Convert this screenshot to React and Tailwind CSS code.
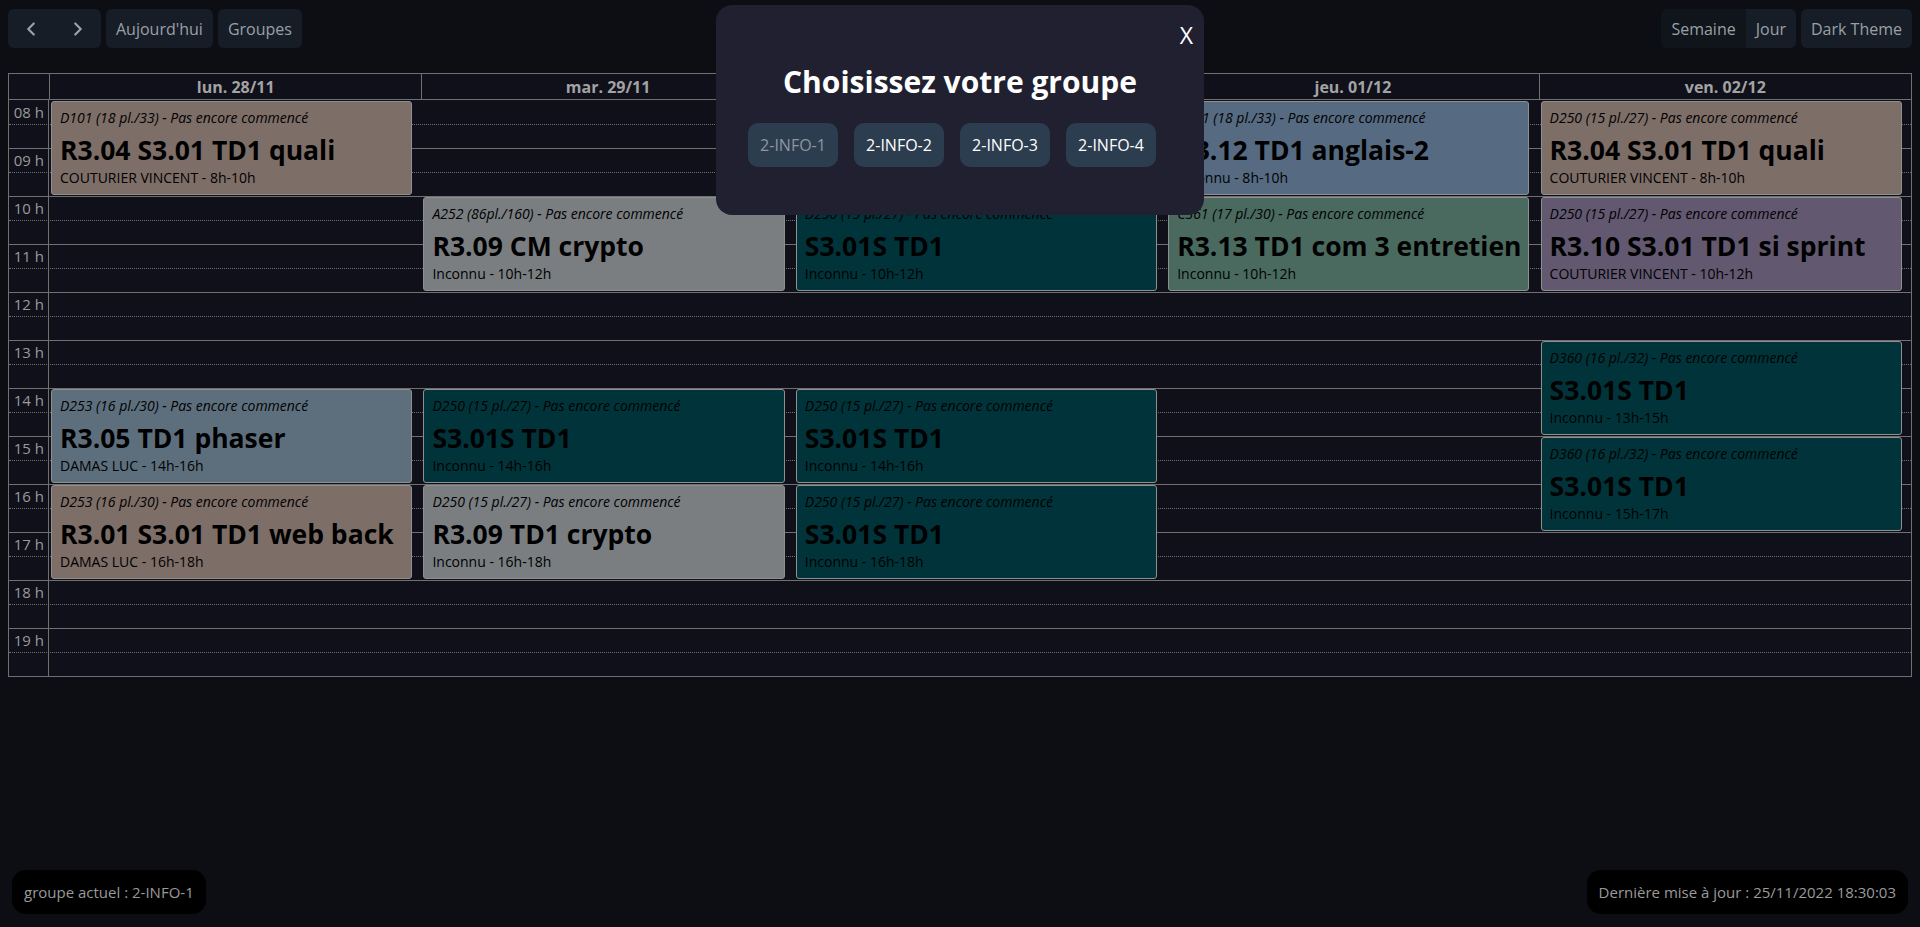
import { ChevronLeft, ChevronRight } from 'lucide-react';

// Week grid starts at 08h, 12 hours, two 24px slots per hour
const START = 8;
const HOURS = 12;

const days = ['lun. 28/11', 'mar. 29/11', 'mer. 30/11', 'jeu. 01/12', 'ven. 02/12'];

const BROWN = '#7d6e68';
const TEAL = '#00343a';
const GREY = '#7a7e80';

const events = [
  { d: 0, s: 8, e: 10, c: BROWN, room: 'D101 (18 pl./33)', title: 'R3.04 S3.01 TD1 quali', who: 'COUTURIER VINCENT' },
  { d: 0, s: 14, e: 16, c: '#5d6f7d', room: 'D253 (16 pl./30)', title: 'R3.05 TD1 phaser', who: 'DAMAS LUC' },
  { d: 0, s: 16, e: 18, c: BROWN, room: 'D253 (16 pl./30)', title: 'R3.01 S3.01 TD1 web back', who: 'DAMAS LUC' },
  { d: 1, s: 10, e: 12, c: GREY, room: 'A252 (86pl./160)', title: 'R3.09 CM crypto', who: 'Inconnu' },
  { d: 1, s: 14, e: 16, c: TEAL, room: 'D250 (15 pl./27)', title: 'S3.01S TD1', who: 'Inconnu' },
  { d: 1, s: 16, e: 18, c: GREY, room: 'D250 (15 pl./27)', title: 'R3.09 TD1 crypto', who: 'Inconnu' },
  { d: 2, s: 10, e: 12, c: TEAL, room: 'D250 (15 pl./27)', title: 'S3.01S TD1', who: 'Inconnu' },
  { d: 2, s: 14, e: 16, c: TEAL, room: 'D250 (15 pl./27)', title: 'S3.01S TD1', who: 'Inconnu' },
  { d: 2, s: 16, e: 18, c: TEAL, room: 'D250 (15 pl./27)', title: 'S3.01S TD1', who: 'Inconnu' },
  { d: 3, s: 8, e: 10, c: '#566b82', room: 'D101 (18 pl./33)', title: 'R3.12 TD1 anglais-2', who: 'Inconnu' },
  { d: 3, s: 10, e: 12, c: '#4a6a60', room: 'C361 (17 pl./30)', title: 'R3.13 TD1 com 3 entretien', who: 'Inconnu' },
  { d: 4, s: 8, e: 10, c: BROWN, room: 'D250 (15 pl./27)', title: 'R3.04 S3.01 TD1 quali', who: 'COUTURIER VINCENT' },
  { d: 4, s: 10, e: 12, c: '#625870', room: 'D250 (15 pl./27)', title: 'R3.10 S3.01 TD1 si sprint', who: 'COUTURIER VINCENT' },
  { d: 4, s: 13, e: 15, c: TEAL, room: 'D360 (16 pl./32)', title: 'S3.01S TD1', who: 'Inconnu' },
  { d: 4, s: 15, e: 17, c: TEAL, room: 'D360 (16 pl./32)', title: 'S3.01S TD1', who: 'Inconnu' },
];

const groups = ['2-INFO-1', '2-INFO-2', '2-INFO-3', '2-INFO-4'];

function Toolbar() {
  return (
    <div className="flex items-start justify-between px-2 pt-[9px]">
      <div className="flex gap-[5px]">
        <div className="flex h-[39px] overflow-hidden rounded-md bg-[#161d27]">
          <button className="flex w-[46px] items-center justify-center text-[#9aa0a6]">
            <ChevronLeft size={22} strokeWidth={2.4} />
          </button>
          <button className="flex w-[47px] items-center justify-center text-[#9aa0a6]">
            <ChevronRight size={22} strokeWidth={2.4} />
          </button>
        </div>
        <button className="h-[39px] rounded-md bg-[#161d27] px-[10px] text-[16px] text-[#9aa0a6]">Aujourd'hui</button>
        <button className="h-[39px] rounded-md bg-[#161d27] px-[10px] text-[16px] text-[#9aa0a6]">Groupes</button>
      </div>
      <div className="flex gap-[5px]">
        <div className="flex h-[39px] overflow-hidden rounded-md">
          <button className="bg-[#0f151a] px-[10px] text-[16px] text-[#9aa0a6]">Semaine</button>
          <button className="bg-[#161d27] px-[10px] text-[16px] text-[#9aa0a6]">Jour</button>
        </div>
        <button className="h-[39px] rounded-md bg-[#161d27] px-[10px] text-[16px] text-[#9aa0a6]">Dark Theme</button>
      </div>
    </div>
  );
}

function Event({ ev }) {
  return (
    <div
      className="z-10 mb-px ml-[2px] mr-[2.5%] mt-px overflow-hidden rounded-[3px] border border-[#8f8f8f] px-[8px] pt-[6px] text-black"
      style={{ gridColumn: ev.d + 2, gridRow: `${(ev.s - START) * 2 + 1} / span ${(ev.e - ev.s) * 2}`, backgroundColor: ev.c }}
    >
      <div className="whitespace-nowrap text-[14px] italic leading-[20px]">{ev.room} - Pas encore commencé</div>
      <div className="mt-[5px] whitespace-nowrap text-[26.5px] font-bold leading-[34px]">{ev.title}</div>
      <div className="mt-px whitespace-nowrap text-[14px] leading-[20px]">
        {ev.who} - {ev.s}h-{ev.e}h
      </div>
    </div>
  );
}

function Calendar() {
  const slots = Array.from({ length: HOURS * 2 }, (_, i) => i);
  return (
    <div className="mx-2 mt-[25px] border border-[#707070] bg-[#10101b]">
      <div className="grid h-[26px] grid-cols-[40px_repeat(5,1fr)] border-b border-[#707070]">
        <div />
        {days.map((d) => (
          <div key={d} className="flex items-center justify-center border-l border-[#707070] text-[16px] font-bold text-[#a3a3a3]">
            {d}
          </div>
        ))}
      </div>
      <div className="grid grid-cols-[40px_repeat(5,1fr)] grid-rows-[repeat(24,24px)]">
        {slots.map((i) =>
          i === 0 ? null : (
            <div
              key={'l' + i}
              className={i % 2 === 0 ? 'border-t border-[#707070]' : 'border-t border-dotted border-[#707070]'}
              style={{ gridColumn: '1 / -1', gridRow: i + 1 }}
            />
          )
        )}
        <div className="border-r border-[#707070]" style={{ gridColumn: 1, gridRow: '1 / -1' }} />
        {Array.from({ length: HOURS }, (_, h) => (
          <div
            key={'h' + h}
            className="pr-[5px] pt-[2px] text-right text-[15px] leading-[20px] text-[#9a9a9a]"
            style={{ gridColumn: 1, gridRow: h * 2 + 1 }}
          >
            {String(START + h).padStart(2, '0')} h
          </div>
        ))}
        {events.map((ev, i) => (
          <Event key={i} ev={ev} />
        ))}
      </div>
    </div>
  );
}

function GroupModal() {
  return (
    <div className="absolute left-[716px] top-[5px] z-30 h-[210px] w-[488px] rounded-[16px] bg-[#202031]">
      <button className="absolute right-[11px] top-[16px] text-[23px] leading-[28px] text-white">X</button>
      <h2 className="pt-[57px] text-center text-[30px] font-bold leading-[40px] text-white">Choisissez votre groupe</h2>
      <div className="mt-[21px] flex justify-center">
        {groups.map((g, i) => (
          <button
            key={g}
            className={`mr-4 h-[44px] w-[90px] rounded-[10px] bg-[#2c3d50] text-[16px] ${i === 0 ? 'text-[#8f96a0]' : 'text-white'}`}
          >
            {g}
          </button>
        ))}
      </div>
    </div>
  );
}

export default function App() {
  return (
    <div className="relative h-[927px] w-full overflow-hidden bg-[#0d0e13] font-['Open_Sans',sans-serif]">
      <Toolbar />
      <Calendar />
      <GroupModal />
      <div className="fixed bottom-[13px] left-3 z-20 flex h-[44px] items-center rounded-[14px] bg-black px-3 text-[15px] text-[#9a9a9a]">
        groupe actuel : 2-INFO-1
      </div>
      <div className="fixed bottom-[13px] right-3 z-20 flex h-[44px] items-center rounded-[14px] bg-black px-3 text-[15px] text-[#9a9a9a]">
        Dernière mise à jour : 25/11/2022 18:30:03
      </div>
    </div>
  );
}
